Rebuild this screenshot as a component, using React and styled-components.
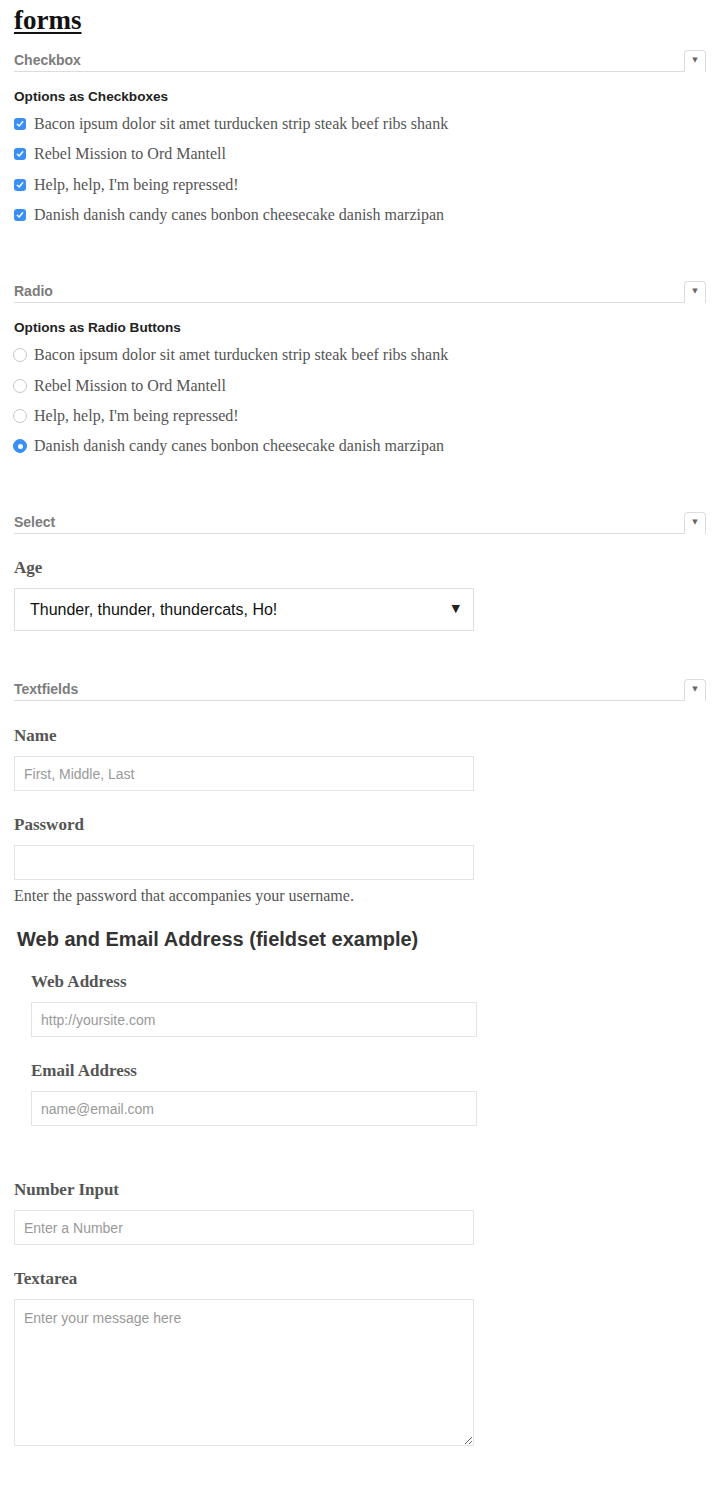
import React from "react";
import styled, { createGlobalStyle } from "styled-components";

const Global = createGlobalStyle`
  html, body { margin: 0; padding: 0; background: #fff; }
  body { font-family: "Liberation Serif", Georgia, serif; color: #555; }
  * { box-sizing: border-box; }
`;

const Page = styled.div`
  padding: 5px 14px 60px 14px;
`;

const Title = styled.h1`
  margin: 0;
  font-family: "Liberation Serif", Georgia, serif;
  font-size: 27px;
  line-height: 30px;
  font-weight: bold;
  color: #111;
  text-decoration: underline;
  text-decoration-thickness: 2px;
  text-underline-offset: 3px;
`;

const Section = styled.section`
  margin-top: ${(p) => p.$top}px;
`;

const Header = styled.div`
  display: flex;
  align-items: stretch;
  height: 22px;
`;

const HeaderLabel = styled.div`
  flex: 1;
  border-bottom: 1px solid #dcdcdc;
  font-family: "Liberation Sans", Arial, sans-serif;
  font-size: 14px;
  font-weight: bold;
  color: #7c7c7c;
  line-height: 20px;
`;

const Tab = styled.div`
  width: 22px;
  border: 1px solid #dcdcdc;
  border-bottom: none;
  border-radius: 4px 4px 0 0;
  display: flex;
  justify-content: center;
  padding-top: 5px;
  font-size: 7px;
  color: #666;
  font-family: "DejaVu Sans", sans-serif;
  line-height: 8px;
`;

const Legend = styled.div`
  margin-top: 17px;
  margin-bottom: 4px;
  font-family: "Liberation Sans", Arial, sans-serif;
  font-size: 13.6px;
  font-weight: bold;
  color: #222;
  line-height: 16px;
`;

const OptionList = styled.div`
  display: flex;
  flex-direction: column;
`;

const Option = styled.label`
  display: flex;
  align-items: center;
  gap: 8px;
  height: 30.3px;
  font-family: "Liberation Serif", Georgia, serif;
  font-size: 16px;
  color: #555;
`;

const CheckMark = styled.span`
  width: 12px;
  height: 12px;
  border-radius: 3px;
  background: #3a8ff7;
  display: flex;
  align-items: center;
  justify-content: center;
  flex: none;
`;

const RadioMark = styled.span`
  width: 14px;
  height: 14px;
  border-radius: 50%;
  flex: none;
  margin-left: -1px;
  margin-right: -1px;
  display: flex;
  align-items: center;
  justify-content: center;
  border: 1px solid ${(p) => (p.$on ? "#3a8ff7" : "#c8c8c8")};
  background: ${(p) => (p.$on ? "#3a8ff7" : "#fff")};
  &::after {
    content: "";
    width: 5px;
    height: 5px;
    border-radius: 50%;
    background: ${(p) => (p.$on ? "#fff" : "transparent")};
  }
`;

const Field = styled.div`
  margin-top: ${(p) => p.$top}px;
`;

const FieldLabel = styled.label`
  display: block;
  font-family: "Liberation Serif", Georgia, serif;
  font-size: 17px;
  font-weight: bold;
  color: #555;
  line-height: 20px;
  margin-bottom: 10px;
`;

const SelectWrap = styled.div`
  position: relative;
  width: 460px;
`;

const Select = styled.select`
  appearance: none;
  width: 460px;
  height: 43px;
  border: 1px solid #e0e0e0;
  border-radius: 0;
  background: #fff;
  padding: 0 15px;
  font-family: "Liberation Sans", Arial, sans-serif;
  font-size: 16px;
  color: #111;
`;

const Arrow = styled.span`
  position: absolute;
  right: 14px;
  top: 14px;
  font-family: "DejaVu Sans", sans-serif;
  font-size: 11px;
  color: #222;
  pointer-events: none;
`;

const Input = styled.input`
  display: block;
  width: ${(p) => p.$w || 460}px;
  height: 35px;
  border: 1px solid #e3e3e3;
  border-radius: 0;
  padding: 0 9px;
  font-family: "Liberation Sans", Arial, sans-serif;
  font-size: 14px;
  color: #333;
  outline: none;
  &::placeholder { color: #999; }
`;

const Textarea = styled.textarea`
  display: block;
  width: 460px;
  height: 147px;
  border: 1px solid #e3e3e3;
  border-radius: 0;
  padding: 9px 9px;
  font-family: "Liberation Sans", Arial, sans-serif;
  font-size: 14px;
  line-height: 18px;
  color: #333;
  outline: none;
  &::placeholder { color: #999; }
`;

const Help = styled.div`
  margin-top: 7px;
  font-family: "Liberation Serif", Georgia, serif;
  font-size: 16px;
  color: #555;
  line-height: 18px;
`;

const Fieldset = styled.fieldset`
  margin: 22px 0 0 3px;
  padding: 0 0 0 14px;
  border: none;
  min-width: 0;
`;

const FsLegend = styled.legend`
  padding: 0;
  margin-left: -14px;
  font-family: "Liberation Sans", Arial, sans-serif;
  font-size: 20px;
  font-weight: bold;
  color: #333;
  line-height: 24px;
`;

const Check = () => (
  <svg width="8" height="8" viewBox="0 0 8 8">
    <path d="M1.3 4.2 L3.2 6 L6.7 1.8" fill="none" stroke="#fff" strokeWidth="1.4" strokeLinecap="round" strokeLinejoin="round" />
  </svg>
);

const items = [
  "Bacon ipsum dolor sit amet turducken strip steak beef ribs shank",
  "Rebel Mission to Ord Mantell",
  "Help, help, I'm being repressed!",
  "Danish danish candy canes bonbon cheesecake danish marzipan",
];

const SectionHeader = ({ children }) => (
  <Header>
    <HeaderLabel>{children}</HeaderLabel>
    <Tab>▼</Tab>
  </Header>
);

export default function App() {
  return (
    <Page>
      <Global />
      <Title>forms</Title>

      <Section $top={15}>
        <SectionHeader>Checkbox</SectionHeader>
        <Legend>Options as Checkboxes</Legend>
        <OptionList>
          {items.map((t) => (
            <Option key={t}>
              <CheckMark><Check /></CheckMark>
              {t}
            </Option>
          ))}
        </OptionList>
      </Section>

      <Section $top={51}>
        <SectionHeader>Radio</SectionHeader>
        <Legend>Options as Radio Buttons</Legend>
        <OptionList>
          {items.map((t, i) => (
            <Option key={t}>
              <RadioMark $on={i === 3} />
              {t}
            </Option>
          ))}
        </OptionList>
      </Section>

      <Section $top={51}>
        <SectionHeader>Select</SectionHeader>
        <Field $top={24}>
          <FieldLabel>Age</FieldLabel>
          <SelectWrap>
            <Select defaultValue="a">
              <option value="a">Thunder, thunder, thundercats, Ho!</option>
            </Select>
            <Arrow>▼</Arrow>
          </SelectWrap>
        </Field>
      </Section>

      <Section $top={48}>
        <SectionHeader>Textfields</SectionHeader>
        <Field $top={25}>
          <FieldLabel>Name</FieldLabel>
          <Input placeholder="First, Middle, Last" />
        </Field>
        <Field $top={24}>
          <FieldLabel>Password</FieldLabel>
          <Input type="password" />
          <Help>Enter the password that accompanies your username.</Help>
        </Field>
        <Fieldset>
          <FsLegend>Web and Email Address (fieldset example)</FsLegend>
          <Field $top={21}>
            <FieldLabel>Web Address</FieldLabel>
            <Input $w={446} placeholder="http://yoursite.com" />
          </Field>
          <Field $top={24}>
            <FieldLabel>Email Address</FieldLabel>
            <Input $w={446} placeholder="name@email.com" />
          </Field>
        </Fieldset>
        <Field $top={54}>
          <FieldLabel>Number Input</FieldLabel>
          <Input type="number" placeholder="Enter a Number" />
        </Field>
        <Field $top={24}>
          <FieldLabel>Textarea</FieldLabel>
          <Textarea placeholder="Enter your message here" />
        </Field>
      </Section>
    </Page>
  );
}
